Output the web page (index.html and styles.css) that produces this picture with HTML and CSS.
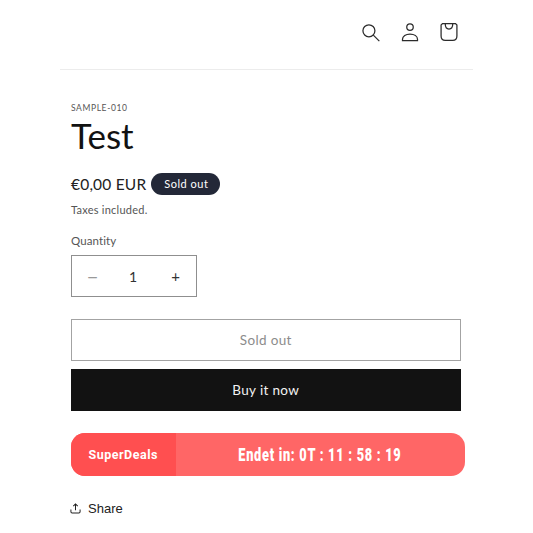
FILE: index.html
```html
<!DOCTYPE html>
<html lang="en">
<head>
<meta charset="utf-8">
<title>Test</title>
<link rel="stylesheet" href="styles.css">
</head>
<body>
<header class="header">
  <svg class="icon" viewBox="0 0 24 24" aria-label="Search"><circle cx="9.500" cy="10.500" r="7.200"/><path d="M14.800 15.800 22 23"/></svg>
  <svg class="icon" viewBox="0 0 24 24" aria-label="Account"><circle cx="12" cy="6" r="3.900"/><path d="M3 22.300v-1.500c0-3.900 4-6.300 9-6.300s9 2.400 9 6.300v1.500z"/></svg>
  <svg class="icon" viewBox="0 0 24 24" aria-label="Cart"><path d="M4.200 2h15.600l1.700 1.700v13c0 3.300-2 5.300-5 5.300H7.500c-3 0-5-2-5-5.300v-13z"/><path d="M7.500 2.200c0 4.300 1.800 6.300 4.500 6.300s4.500-2 4.500-6.300"/></svg>
</header>
<main class="product">
  <p class="sku">SAMPLE-010</p>
  <h1 class="title">Test</h1>
  <div class="price-row">
    <span class="price">€0,00 EUR</span>
    <span class="badge">Sold out</span>
  </div>
  <p class="tax">Taxes included.</p>
  <label class="qty-label">Quantity</label>
  <div class="qty">
    <span class="qty-btn minus">−</span>
    <span class="qty-val">1</span>
    <span class="qty-btn">+</span>
  </div>
  <div class="btn btn-out">Sold out</div>
  <div class="btn btn-buy">Buy it now</div>
  <div class="deals">
    <div class="deals-name">SuperDeals</div>
    <div class="deals-time"><span class="deals-text">Endet in: 0T : 11 : 58 : 19</span></div>
  </div>
  <div class="share">
    <svg class="share-icon" viewBox="0 0 12 12"><path d="M6 8V1.200M3.600 3.400 6 1l2.400 2.400M1 7v2.500c0 .8.500 1.300 1.300 1.300h7.400c.8 0 1.300-.5 1.300-1.300V7"/></svg>
    <span>Share</span>
  </div>
</main>
</body>
</html>
```
FILE: styles.css
```css
* { box-sizing: border-box; }
html, body { margin: 0; padding: 0; background: #fff; }
body { font-family: Lato, sans-serif; color: #121212; overflow: hidden; height: 533px; }

.header {
  margin: 0 60px;
  height: 70px;
  border-bottom: 1px solid #ececec;
  display: flex;
  justify-content: flex-end;
  gap: 19px;
  padding: 22px 14px 0 0;
}
.icon { width: 20px; height: 20px; fill: none; stroke: #2b2b2b; stroke-width: 1.5; }

.product { padding: 32px 0 0 71px; width: 465px; }
.sku { margin: 0; font-size: 8.500px; line-height: 13px; letter-spacing: .6px; color: #555; }
.title { margin: -2px 0 0; font-size: 35px; line-height: 44px; font-weight: 400; color: #121212; }
.price-row { display: flex; align-items: center; gap: 5px; margin-top: 15px; height: 24px; }
.price { font-size: 15.500px; letter-spacing: .2px; color: #222; }
.badge {
  background: #232838;
  color: #fff;
  font-size: 11px;
  letter-spacing: .5px;
  height: 22px;
  line-height: 21px;
  padding: 0 13px;
  border-radius: 11px;
  width: 69px;
  white-space: nowrap;
}
.tax { margin: 6px 0 0; font-size: 11px; line-height: 16px; letter-spacing: .25px; color: #555; }
.qty-label { display: block; margin-top: 15px; font-size: 11.500px; line-height: 16px; letter-spacing: .1px; color: #555; }
.qty {
  margin-top: 6px;
  width: 126px;
  height: 42px;
  border: 1px solid #8f8f8f;
  display: flex;
  align-items: center;
  justify-content: space-between;
  padding: 0 14px;
  font-size: 14px;
  color: #333;
}
.qty-val { margin-right: 2px; }
.qty-btn { width: 13px; text-align: center; font-size: 15px; }
.minus { color: #999; font-size: 20px; }

.btn {
  width: 389.500px;
  height: 42px;
  display: flex;
  align-items: center;
  justify-content: center;
  font-size: 13.500px;
  letter-spacing: .35px;
}
.btn-out { margin-top: 22px; border: 1px solid #a3a3a3; color: #8c8c8c; }
.btn-buy { margin-top: 8px; background: #121212; color: #f2f2f2; }

.deals {
  margin-top: 22px;
  width: 394px;
  height: 43px;
  border-radius: 14px;
  overflow: hidden;
  display: flex;
  background: #ff6666;
  color: #fff;
  font-weight: 700;
}
.deals-name {
  width: 104.500px;
  background: #ff4f50;
  display: flex;
  align-items: center;
  justify-content: center;
  font-family: Roboto, sans-serif;
  font-size: 12.500px;
  letter-spacing: .5px;
}
.deals-time { flex: 1; display: flex; align-items: center; justify-content: center; }
.deals-text {
  font-family: Roboto, sans-serif;
  font-size: 18px;
  font-weight: 900;
  letter-spacing: 1px;
  white-space: nowrap;
  transform: scaleX(.71);
}
.share {
  margin-top: 22px;
  display: flex;
  align-items: center;
  gap: 7px;
  font-family: "Liberation Sans", sans-serif;
  font-size: 13px;
  height: 20px;
  color: #222;
}
.share-icon { width: 11px; height: 11px; margin-left: -1px; fill: none; stroke: #222; stroke-width: 1.100; }
```
